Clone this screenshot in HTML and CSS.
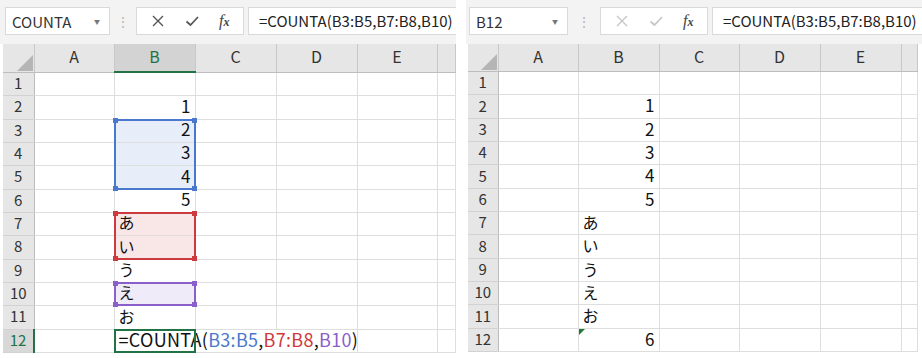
FILE: index.html
```html
<!DOCTYPE html>
<html lang="ja">
<head>
    <meta charset="UTF-8">
    <title>COUNTA</title>
    <link rel="stylesheet" href="styles.css">
</head>
<body>
<div class="shot">
    <!-- editing the formula -->
    <section class="book">
        <div class="fbar">
            <div class="namebox"><span>COUNTA</span><span class="caret">▼</span></div>
            <span class="grip">⋮</span>
            <div class="tools">
                <svg width="14" height="14" viewBox="0 0 14 14"><path d="M2 2L12 12M12 2L2 12" stroke="currentColor" stroke-width="1.4"/></svg>
                <svg width="16" height="14" viewBox="0 0 16 14"><path d="M2.5 7.5L6.5 11L14 3" fill="none" stroke="currentColor" stroke-width="1.7"/></svg>
                <span class="fx"><i>f</i><i class="sub">x</i></span>
            </div>
            <div class="formula">=COUNTA(B3:B5,B7:B8,B10)</div>
        </div>
        <table class="sheet">
            <colgroup><col class="c-row"><col class="c-a"><col class="c-b"><col class="c-c"><col class="c-d"><col class="c-e"><col class="c-f"></colgroup>
            <thead>
                <tr><th class="corner"><svg width="18" height="18" viewBox="0 0 18 18"><polygon points="17,1 17,17 1,17" fill="#b5b5b5"/></svg></th><th>A</th><th class="sel">B</th><th>C</th><th>D</th><th>E</th><th></th></tr>
            </thead>
            <tbody>
                <tr><th>1</th><td></td><td></td><td></td><td></td><td></td><td></td></tr>
                <tr><th>2</th><td></td><td class="num">1</td><td></td><td></td><td></td><td></td></tr>
                <tr><th>3</th><td></td><td class="num fill-blue anchor">2<span class="range blue h3"><i class="tl"></i><i class="tr"></i><i class="bl"></i><i class="br"></i></span></td><td></td><td></td><td></td><td></td></tr>
                <tr><th>4</th><td></td><td class="num fill-blue">3</td><td></td><td></td><td></td><td></td></tr>
                <tr><th>5</th><td></td><td class="num fill-blue">4</td><td></td><td></td><td></td><td></td></tr>
                <tr><th>6</th><td></td><td class="num">5</td><td></td><td></td><td></td><td></td></tr>
                <tr><th>7</th><td></td><td class="kana fill-red anchor">あ<span class="range red h2"><i class="tl"></i><i class="tr"></i><i class="bl"></i><i class="br"></i></span></td><td></td><td></td><td></td><td></td></tr>
                <tr><th>8</th><td></td><td class="kana fill-red">い</td><td></td><td></td><td></td><td></td></tr>
                <tr><th>9</th><td></td><td class="kana">う</td><td></td><td></td><td></td><td></td></tr>
                <tr><th>10</th><td></td><td class="kana fill-purple anchor">え<span class="range purple h1"><i class="tl"></i><i class="tr"></i><i class="bl"></i><i class="br"></i></span></td><td></td><td></td><td></td><td></td></tr>
                <tr><th>11</th><td></td><td class="kana">お</td><td></td><td></td><td></td><td></td></tr>
                <tr><th class="sel">12</th><td></td><td class="edit anchor spill">=COUNTA(<span class="ref-blue">B3:B5</span>,<span class="ref-red">B7:B8</span>,<span class="ref-purple">B10</span>)<span class="range green h1"></span></td><td class="spill"></td><td class="spill-end"></td><td></td><td></td></tr>
            </tbody>
        </table>
    </section>

    <!-- after pressing enter -->
    <section class="book second">
        <div class="fbar">
            <div class="namebox"><span>B12</span><span class="caret">▼</span></div>
            <span class="grip">⋮</span>
            <div class="tools idle">
                <svg width="14" height="14" viewBox="0 0 14 14"><path d="M2 2L12 12M12 2L2 12" stroke="currentColor" stroke-width="1.4"/></svg>
                <svg width="16" height="14" viewBox="0 0 16 14"><path d="M2.5 7.5L6.5 11L14 3" fill="none" stroke="currentColor" stroke-width="1.7"/></svg>
                <span class="fx"><i>f</i><i class="sub">x</i></span>
            </div>
            <div class="formula">=COUNTA(B3:B5,B7:B8,B10)</div>
        </div>
        <table class="sheet">
            <colgroup><col class="c-row"><col class="c-a"><col class="c-b"><col class="c-c"><col class="c-d"><col class="c-e"><col class="c-f"></colgroup>
            <thead>
                <tr><th class="corner"><svg width="18" height="18" viewBox="0 0 18 18"><polygon points="17,1 17,17 1,17" fill="#b5b5b5"/></svg></th><th>A</th><th>B</th><th>C</th><th>D</th><th>E</th><th></th></tr>
            </thead>
            <tbody>
                <tr><th>1</th><td></td><td></td><td></td><td></td><td></td><td></td></tr>
                <tr><th>2</th><td></td><td class="num">1</td><td></td><td></td><td></td><td></td></tr>
                <tr><th>3</th><td></td><td class="num">2</td><td></td><td></td><td></td><td></td></tr>
                <tr><th>4</th><td></td><td class="num">3</td><td></td><td></td><td></td><td></td></tr>
                <tr><th>5</th><td></td><td class="num">4</td><td></td><td></td><td></td><td></td></tr>
                <tr><th>6</th><td></td><td class="num">5</td><td></td><td></td><td></td><td></td></tr>
                <tr><th>7</th><td></td><td class="kana">あ</td><td></td><td></td><td></td><td></td></tr>
                <tr><th>8</th><td></td><td class="kana">い</td><td></td><td></td><td></td><td></td></tr>
                <tr><th>9</th><td></td><td class="kana">う</td><td></td><td></td><td></td><td></td></tr>
                <tr><th>10</th><td></td><td class="kana">え</td><td></td><td></td><td></td><td></td></tr>
                <tr><th>11</th><td></td><td class="kana">お</td><td></td><td></td><td></td><td></td></tr>
                <tr><th>12</th><td></td><td class="num anchor">6<span class="err"></span></td><td></td><td></td><td></td><td></td></tr>
            </tbody>
        </table>
    </section>
</div>
</body>
</html>
```

FILE: styles.css
```css
body {
    margin: 0;
    background: #fff;
    font-family: "Noto Sans CJK JP", "Noto Sans", sans-serif;
    color: #222;
}
.shot {
    display: flex;
    gap: 10px;
}
.book {
    width: 456px;
    overflow: hidden;
}

/* formula bar */
.fbar {
    display: flex;
    align-items: center;
    height: 28px;
    padding: 7px 0 9px 5px;
    background: #f3f3f3;
}
.second .fbar {
    padding-left: 3px;
}
.namebox {
    width: 105px;
    height: 28px;
    box-sizing: border-box;
    flex: none;
    display: flex;
    align-items: center;
    justify-content: space-between;
    padding: 0 9px 0 6px;
    background: #fff;
    border: 1px solid #d9d9d9;
    font-size: 15px;
    color: #333;
}
.second .namebox {
    width: 99px;
}
.caret {
    font-size: 6px;
    color: #777;
}
.grip {
    width: 26px;
    flex: none;
    text-align: center;
    color: #b8b8b8;
    font-size: 14px;
}
.second .grip {
    width: 32px;
}
.tools {
    width: 108px;
    height: 28px;
    box-sizing: border-box;
    flex: none;
    display: flex;
    align-items: center;
    justify-content: space-around;
    padding: 0 4px;
    background: #fff;
    border: 1px solid #d9d9d9;
    color: #555;
}
.tools.idle svg {
    color: #c6c6c6;
}
.fx {
    font-family: "Liberation Serif", serif;
    color: #444;
    font-size: 16px;
}
.fx .sub {
    font-size: 12px;
    font-weight: bold;
}
.formula {
    flex: 1;
    height: 28px;
    box-sizing: border-box;
    margin-left: 4px;
    padding-left: 10px;
    background: #fff;
    border: 1px solid #d9d9d9;
    border-right: none;
    font-size: 15px;
    line-height: 26px;
    white-space: nowrap;
    color: #222;
}

/* grid */
.sheet {
    border-collapse: collapse;
    table-layout: fixed;
    margin-left: 3px;
    width: 452px;
}
.second .sheet {
    margin-left: 2px;
    width: 449px;
}
.c-row { width: 31px; }
.c-a { width: 80px; }
.c-b { width: 81px; }
.c-c { width: 81px; }
.c-d { width: 81px; }
.c-e { width: 80px; }
.c-f { width: 18px; }
.second .c-row { width: 30px; }
.second .c-c { width: 80px; }
.second .c-e { width: 81px; }
.second .c-f { width: 16px; }

thead th {
    height: 24px;
    padding: 0 0 3px;
    line-height: 18px;
    background: #e6e6e6;
    border-right: 1px solid #c8c8c8;
    border-bottom: 1px solid #bdbdbd;
    font-weight: normal;
    font-size: 16px;
    color: #333;
}
thead th.corner {
    padding: 0;
    text-align: right;
    vertical-align: bottom;
    line-height: 0;
}
thead th.sel {
    background: #d3d3d3;
    color: #217346;
    border-bottom: 2px solid #217346;
}
tbody tr {
    height: 23px;
}
tbody tr:nth-child(3n+2) {
    height: 24px;
}
tbody th {
    padding: 0 0 2px;
    line-height: 18px;
    background: #e6e6e6;
    border-right: 1px solid #bdbdbd;
    border-bottom: 1px solid #d2d2d2;
    font-weight: normal;
    font-size: 15px;
    color: #333;
    text-align: center;
}
tbody th.sel {
    background: #d8d8d8;
    color: #217346;
    border-right: 2px solid #217346;
}
td {
    padding: 0 4px 3px;
    border: 1px solid #dedede;
    font-size: 17px;
    line-height: 18px;
    white-space: nowrap;
    color: #111;
}
td.num {
    text-align: right;
}
td.kana {
    font-size: 16px;
}
td.anchor {
    position: relative;
}
td.spill {
    border-right-style: hidden;
}
td.spill-end {
    border-left-style: hidden;
}
td.edit {
    overflow: visible;
    padding-left: 4px;
    font-size: 18px;
    letter-spacing: 0.3px;
}
.fill-blue { background: #e8eef9; }
.fill-red { background: #f9e7e7; }
.fill-purple { background: #f0ebf8; }
.ref-blue { color: #4a78cc; }
.ref-red { color: #d1373b; }
.ref-purple { color: #8b5fc9; }

/* reference outlines drawn over the cells */
.range {
    position: absolute;
    top: -1px;
    left: -1px;
    right: -1px;
    box-sizing: border-box;
    border: 2px solid currentColor;
}
.range.h1 { height: 24px; }
.range.h2 { height: 48px; }
.range.h3 { height: 71px; }
.range.blue { color: #4a78cc; }
.range.red { color: #cc3a3f; }
.range.purple { color: #8b5fc9; }
.range.green { color: #217346; right: auto; width: 82px; }
.range i {
    position: absolute;
    width: 5px;
    height: 5px;
    background: currentColor;
}
.range .tl { top: -3px; left: -3px; }
.range .tr { top: -3px; right: -3px; }
.range .bl { bottom: -3px; left: -3px; }
.range .br { bottom: -3px; right: -3px; }
.err {
    position: absolute;
    top: 0;
    left: 0;
    border-style: solid;
    border-width: 6px 6px 0 0;
    border-color: #1e7a35 transparent transparent transparent;
}
```
